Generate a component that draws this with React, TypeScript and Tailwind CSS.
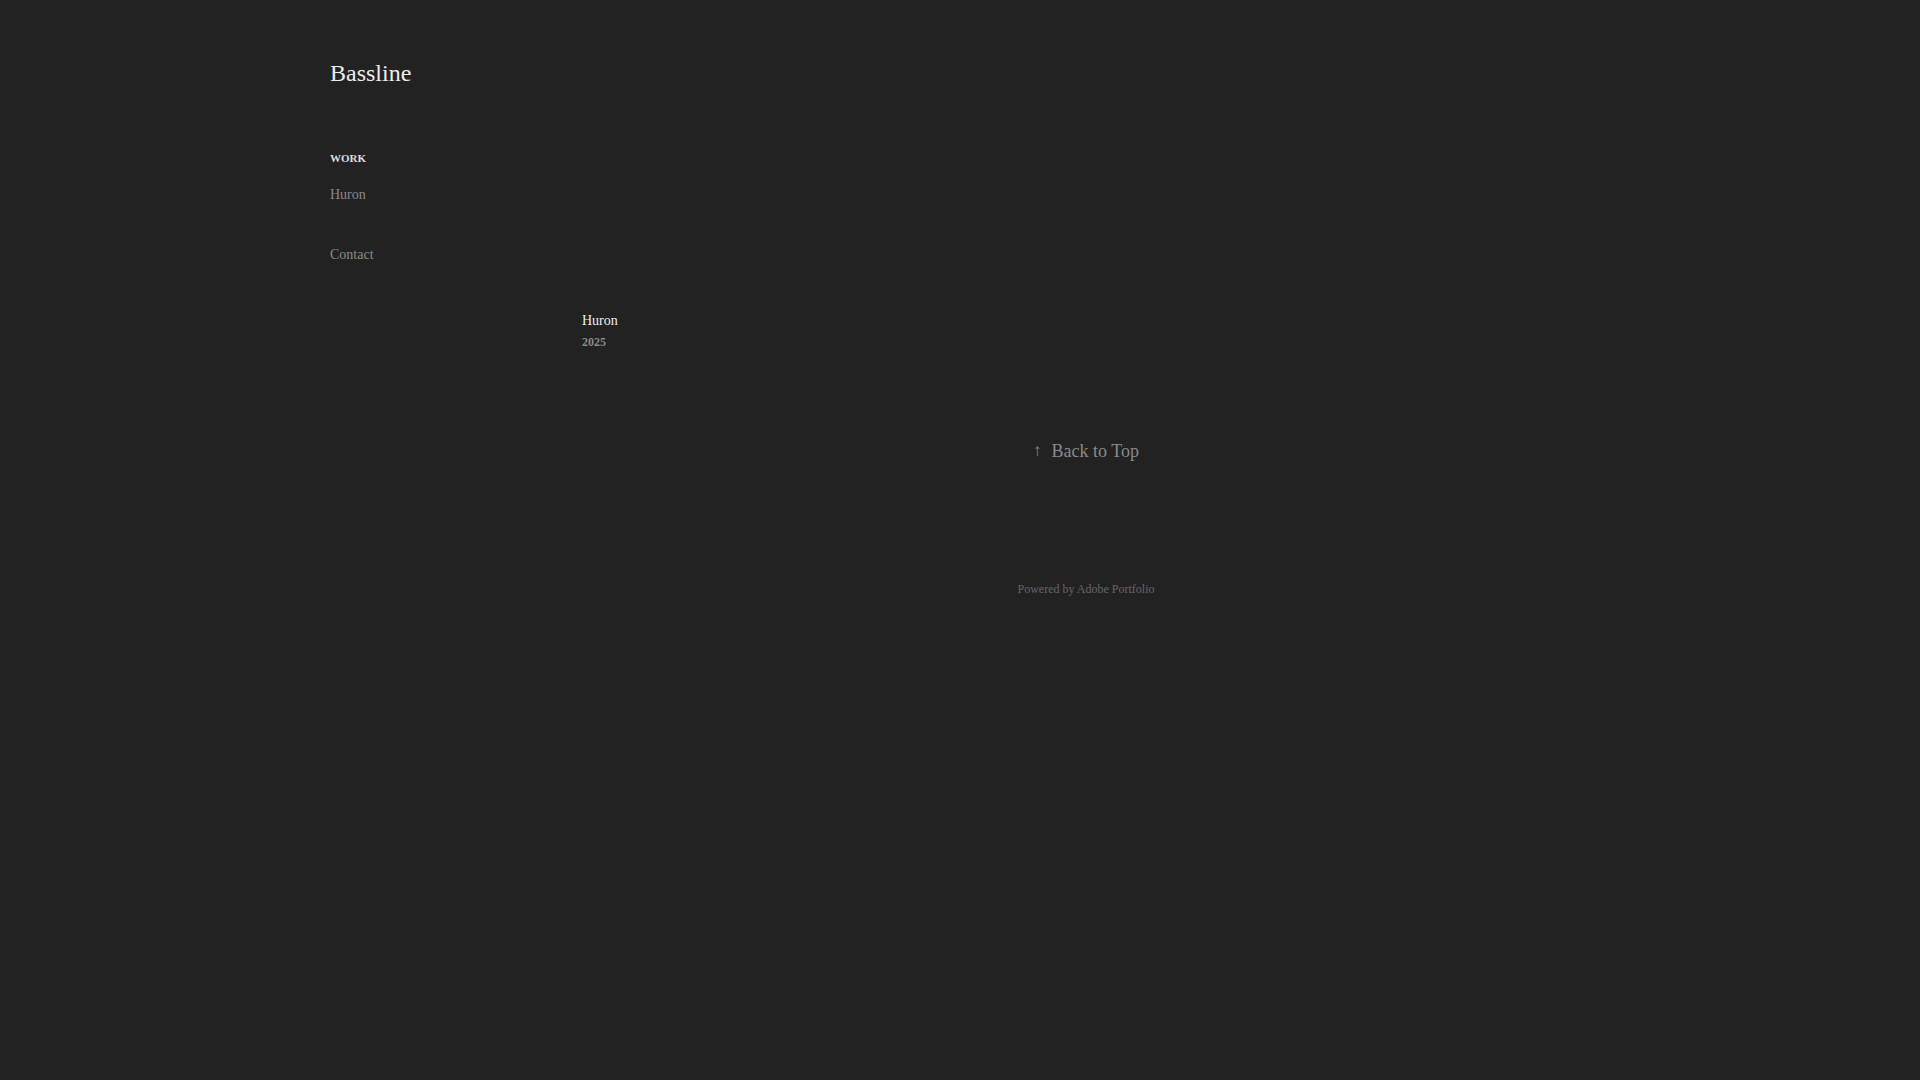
import React from "react";

const serif = { fontFamily: '"Liberation Serif", "Times New Roman", serif' };

const NavLink: React.FC<{ label: string; className?: string }> = ({ label, className }) => (
  <a href="#" className={"block text-[14px] leading-[18px] text-[#8a8a8a] " + (className || "")}>
    {label}
  </a>
);

export default function App() {
  return (
    <div className="min-h-screen bg-[#222222] font-['Liberation_Serif','Times_New_Roman',serif]" style={serif}>
      <div className="mx-auto w-[1260px] pt-[59px]">
        <header>
          <h1 className="text-[24px] leading-[28px] text-[#ededed]">Bassline</h1>
          <nav className="mt-[64px]">
            <div className="text-[11px] leading-[14px] font-bold text-[#dcdcdc]">WORK</div>
            <NavLink label="Huron" className="mt-[21px]" />
            <NavLink label="Contact" className="mt-[42px]" />
          </nav>
        </header>

        <main className="ml-[252px] mt-[48px]">
          <a href="#" className="block">
            <div className="text-[14px] leading-[18px] text-[#ededed]">Huron</div>
            <div className="mt-[4px] text-[12px] leading-[16px] font-bold text-[#8a8a8a]">2025</div>
          </a>

          <footer className="flex flex-col items-center">
            <a href="#" className="mt-[90px] flex items-center gap-[10px] text-[18px] leading-[22px] text-[#8a8a8a]">
              <span className="text-[17px]">↑</span>
              <span>Back to Top</span>
            </a>
            <div className="mt-[119px] text-[12px] leading-[16px] text-[#666666]">
              Powered by <a href="#">Adobe Portfolio</a>
            </div>
          </footer>
        </main>
      </div>
    </div>
  );
}
